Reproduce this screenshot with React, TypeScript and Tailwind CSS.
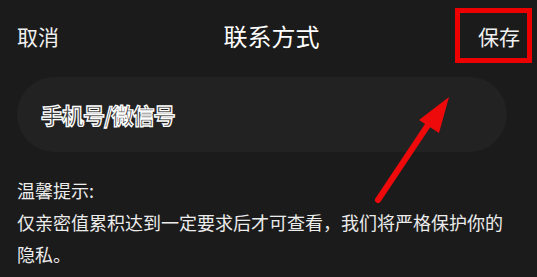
export default function App() {
  return (
    <div className="relative w-[537px] h-[277px] overflow-hidden bg-[#1b1b1b] font-['Noto_Sans_CJK_SC','Noto_Sans',sans-serif]">
      <div className="flex items-center justify-between h-[72px] px-[17px]">
        <button type="button" className="text-[21px] text-[#f0f0f0] leading-none">
          取消
        </button>
        <div className="text-[24px] text-white leading-none pl-[6px]">联系方式</div>
        <button type="button" className="text-[21px] text-[#f0f0f0] leading-none">
          保存
        </button>
      </div>

      <div className="mt-[5px] ml-[17px] w-[490px] h-[75px] rounded-full bg-[#222222] flex items-center pl-[24px]">
        <span className="text-[22px] font-bold text-[#3a3a3a] [-webkit-text-stroke:1.3px_#ffffff] tracking-[-1px]">
          手机号/微信号
        </span>
      </div>

      <div className="mt-[22px] px-[17px] text-[18px] leading-[32px] text-[#ececec]">
        <p>温馨提示:</p>
        <p>仅亲密值累积达到一定要求后才可查看，我们将严格保护你的隐私。</p>
      </div>

      {/* annotation overlay */}
      <div className="absolute left-[455px] top-[8px] w-[77px] h-[55px] border-[5px] border-[#ee0000]" />
      <svg className="absolute left-0 top-0 pointer-events-none" width="537" height="277" viewBox="0 0 537 277">
        <line x1="378" y1="200" x2="430" y2="122" stroke="#ee0a0a" strokeWidth="6" strokeLinecap="round" />
        <polygon points="449,97 419,120 439,133" fill="#ee0a0a" />
      </svg>
    </div>
  );
}
